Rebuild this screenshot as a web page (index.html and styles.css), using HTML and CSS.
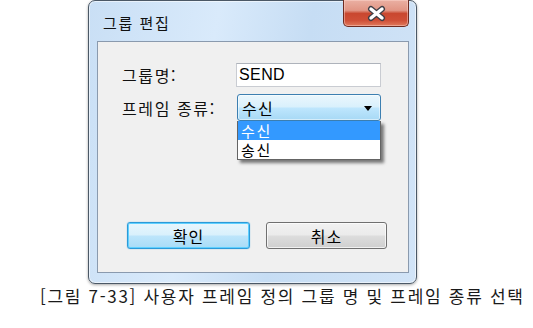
FILE: index.html
```html
<!DOCTYPE html>
<html lang="ko">
<head>
<meta charset="utf-8">
<title>그룹 편집</title>
<link rel="stylesheet" href="styles.css">
</head>
<body>
<div class="page">
  <div class="window">
    <div class="titlebar">
      <span class="title">그룹 편집</span>
      <button class="close" type="button" aria-label="닫기">
        <svg width="66" height="26" viewBox="0 0 66 26">
          <path d="M27 9 L38 18 M38 9 L27 18" stroke="#3e3e46" stroke-width="6" stroke-linecap="round" fill="none"/>
          <path d="M27 9 L38 18 M38 9 L27 18" stroke="#ffffff" stroke-width="3.4" stroke-linecap="round" fill="none"/>
        </svg>
      </button>
    </div>
    <div class="client">
      <div class="form">
        <label class="label">그룹명:</label>
        <div class="input">SEND</div>
        <label class="label">프레임 종류:</label>
        <div class="combo-wrap">
          <div class="combo">
            <span class="combo-text">수신</span>
            <span class="arrow"></span>
          </div>
          <ul class="list">
            <li class="item selected">수신</li>
            <li class="item">송신</li>
          </ul>
        </div>
      </div>
      <div class="buttons">
        <button class="btn default" type="button">확인</button>
        <button class="btn" type="button">취소</button>
      </div>
    </div>
  </div>
  <p class="caption">[그림 7-33] 사용자 프레임 정의 그룹 명 및 프레임 종류 선택</p>
</div>
</body>
</html>
```

FILE: styles.css
```css
* { box-sizing: border-box; }
html, body { margin: 0; padding: 0; background: #ffffff; }
body { font-family: "Noto Sans CJK KR", "Noto Sans", sans-serif; color: #000; }

.page { width: 533px; height: 328px; overflow: hidden; }

.window {
  margin-left: 88px;
  width: 329px;
  height: 284px;
  border: 1px solid #4b5866;
  border-radius: 7px;
  background: linear-gradient(100deg, #c9dff5 0%, #d9eafb 35%, #c6ddf4 60%, #d2e4f7 100%);
  box-shadow: inset 0 0 0 1px rgba(255,255,255,0.55), 0 1px 3px rgba(0,0,0,0.35);
  padding: 0 7px 10px 8px;
  display: flex;
  flex-direction: column;
}

.titlebar {
  height: 40px;
  display: flex;
  justify-content: space-between;
  align-items: flex-start;
  flex-shrink: 0;
}
.title {
  margin: 12px 0 0 6px;
  font-size: 15px;
  line-height: 20px;
  letter-spacing: 1.6px;
  color: #111;
}
.close {
  width: 66px;
  height: 27px;
  margin: -1px 0 0 0;
  padding: 0;
  border: 1px solid #6e2b21;
  border-top: none;
  border-radius: 0 0 5px 5px;
  background: linear-gradient(180deg, #eab0a3 0%, #e19584 40%, #c9472f 52%, #cf4f37 78%, #e07a5c 100%);
  box-shadow: inset 0 0 0 1px rgba(255,220,210,0.45);
  display: block;
}
.close svg { display: block; }

.client {
  flex: 1;
  border: 1px solid #8a9aae;
  background: #f0f0f0;
  display: flex;
  flex-direction: column;
}

.form {
  padding: 21px 0 0 24px;
  display: grid;
  grid-template-columns: 114px 145px;
  grid-template-rows: 24px 27px;
  row-gap: 7px;
  align-items: center;
}
.label {
  font-size: 16px;
  line-height: 20px;
  letter-spacing: 1.6px;
  color: #111;
}
.input {
  height: 24px;
  background: #fff;
  border: 1px solid #c9ccd2;
  border-top-color: #aeb3bb;
  font-family: "Liberation Sans", "DejaVu Sans", sans-serif;
  font-size: 16px;
  line-height: 22px;
  padding-left: 2px;
  letter-spacing: 0.4px;
}

.combo-wrap { position: relative; height: 27px; }
.combo {
  height: 27px;
  margin-left: 1px;
  border: 1px solid #3c7fb1;
  border-radius: 3px;
  background: linear-gradient(180deg, #eaf6fd 0%, #d9f0fc 48%, #bee6fd 52%, #a7d9f5 100%);
  box-shadow: inset 0 0 0 1px rgba(255,255,255,0.5);
  display: flex;
  align-items: center;
  justify-content: space-between;
  padding: 0 8px 0 4px;
  font-size: 16px;
  letter-spacing: 1.2px;
}
.arrow {
  width: 0;
  height: 0;
  border-left: 4px solid transparent;
  border-right: 4px solid transparent;
  border-top: 5px solid #000;
  margin-top: 1px;
}
.list {
  position: absolute;
  left: 1px;
  top: 27px;
  width: 144px;
  margin: 0;
  padding: 0;
  list-style: none;
  background: #fff;
  border: 1px solid #646464;
  border-top: none;
  box-shadow: 3px 3px 3px rgba(0,0,0,0.5);
  z-index: 2;
}
.item {
  height: 19px;
  font-size: 15px;
  line-height: 19px;
  padding-left: 3px;
  letter-spacing: 1.6px;
  overflow: hidden;
}
.item.selected { background: #3399ff; color: #fff; }

.buttons {
  margin-top: auto;
  padding: 0 0 23px 29px;
  display: flex;
  gap: 16px;
}
.btn {
  width: 121px;
  height: 27px;
  padding: 0;
  border: 1px solid #707070;
  border-radius: 3px;
  background: linear-gradient(180deg, #f2f2f2 0%, #ebebeb 48%, #dddddd 52%, #cfcfcf 100%);
  box-shadow: inset 0 0 0 1px rgba(255,255,255,0.7);
  font-family: "Noto Sans CJK KR", sans-serif;
  font-size: 16px;
  line-height: 24px;
  letter-spacing: 1px;
  color: #000;
}
.btn.default {
  width: 123px;
  border-color: #2c9ad8;
  background: linear-gradient(180deg, #e8f6fd 0%, #d9f0fc 48%, #bde5fb 52%, #a8dcf7 100%);
  box-shadow: inset 0 0 0 1px #5fd0ff, 0 0 1px #3aa0e0;
}

.caption {
  margin: 1px 0 0 0;
  padding-left: 40px;
  font-size: 17px;
  line-height: 22px;
  letter-spacing: 1.7px;
  color: #1a1a1a;
  white-space: nowrap;
}
```
